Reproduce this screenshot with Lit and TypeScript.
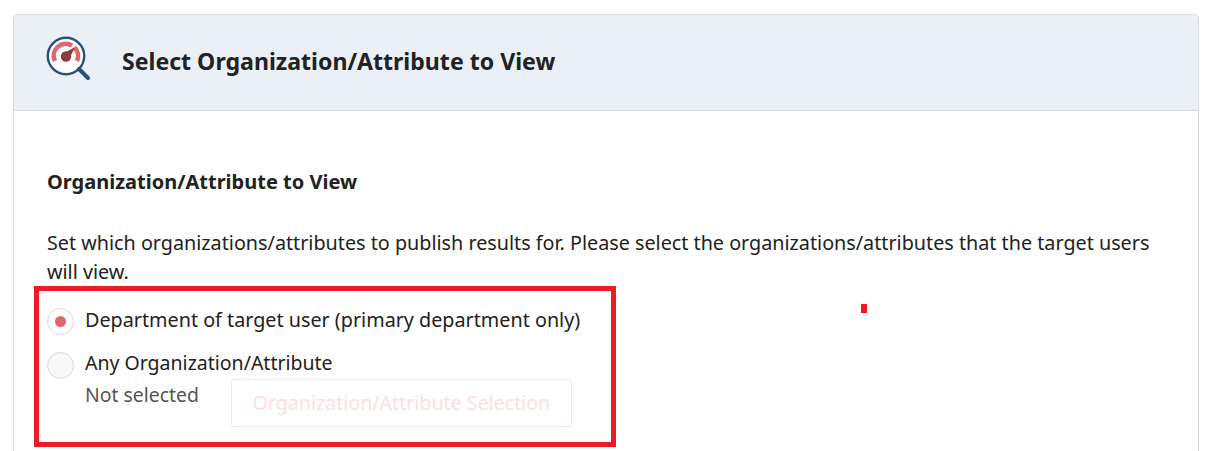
import { LitElement, html, css } from "lit";
import { customElement } from "lit/decorators.js";

@customElement("app-root")
export class AppRoot extends LitElement {
  static styles = css`
    :host {
      display: block;
      position: relative;
      height: 451px;
      overflow: hidden;
      background: #fff;
      font-family: "Noto Sans", "Open Sans", sans-serif;
      color: #222;
    }
    .page {
      padding: 14px 8px 0 13px;
    }
    .card {
      border: 1px solid #d9d9d9;
      border-bottom: none;
      border-radius: 5px 5px 0 0;
      height: 500px;
    }
    .head {
      display: flex;
      align-items: center;
      height: 95px;
      background: #ebf0f7;
      border-bottom: 1px solid #d9d9d9;
      border-radius: 4px 4px 0 0;
      padding-left: 32px;
      gap: 31px;
    }
    .head svg {
      width: 45px;
      height: 45px;
      flex: none;
      margin-top: -8px;
    }
    h1 {
      margin: -3px 0 0;
      font-size: 23.1px;
      font-weight: 700;
      line-height: 30px;
    }
    .body {
      padding: 56px 32px 0 33px;
    }
    h2 {
      margin: 0 0 31px;
      font-size: 20px;
      font-weight: 700;
      line-height: 30px;
    }
    p {
      margin: 0;
      font-size: 19.75px;
      line-height: 29px;
    }
    .opts {
      display: flex;
      flex-direction: column;
      gap: 16px;
      margin-top: 21px;
    }
    .opt {
      display: flex;
      align-items: center;
      gap: 11px;
      font-size: 19.75px;
      height: 28px;
    }
    .opt.any {
      font-size: 19.5px;
    }
    .opt .label {
      margin-bottom: 4px;
    }
    .opt.any .label {
      margin-bottom: 6px;
    }
    .radio {
      width: 27px;
      height: 27px;
      box-sizing: border-box;
      border: 1px solid #d9d9d9;
      border-radius: 50%;
      background: #f8f8f8;
      display: flex;
      align-items: center;
      justify-content: center;
      flex: none;
    }
    .radio.on {
      background: #fff;
    }
    .radio.on::after {
      content: "";
      width: 11px;
      height: 11px;
      border-radius: 50%;
      background: #de686c;
    }
    .sel {
      display: flex;
      align-items: flex-start;
      gap: 32px;
      padding-left: 38px;
      margin-top: -16px;
      font-size: 19.4px;
      color: #555;
      line-height: 32px;
    }
    .btn {
      border: 1px solid #fae3e4;
      border-radius: 3px;
      width: 341px;
      height: 48px;
      box-sizing: border-box;
      display: flex;
      align-items: center;
      justify-content: center;
      color: #fbe0e1;
      font-size: 19.6px;
    }
    .mark {
      position: absolute;
      left: 34px;
      top: 286px;
      width: 582px;
      height: 161px;
      box-sizing: border-box;
      border: 5px solid #ed1c24;
    }
    .dot {
      position: absolute;
      left: 861px;
      top: 304px;
      width: 6px;
      height: 9px;
      background: #ed1c24;
    }
  `;

  render() {
    return html`
      <div class="page">
        <div class="card">
          <div class="head">
            <svg viewBox="0 0 45 45" fill="none">
              <circle cx="20" cy="20" r="18.2" fill="#fff" stroke="#2a5279" stroke-width="2.4" />
              <path d="M33 33 L42 42" stroke="#2a5279" stroke-width="4" stroke-linecap="round" />
              <path d="M8.9 25 A12 12 0 0 1 26 9.6" stroke="#de686c" stroke-width="4.6" />
              <path d="M28.5 11.5 A12 12 0 0 1 31.1 25" stroke="#de686c" stroke-width="4.6" />
              <circle cx="20" cy="20.5" r="5.2" fill="#8c3c40" />
              <path d="M18.5 17 L29 11 L23.5 22.5 Z" fill="#8c3c40" />
            </svg>
            <h1>Select Organization/Attribute to View</h1>
          </div>
          <div class="body">
            <h2>Organization/Attribute to View</h2>
            <p>
              Set which organizations/attributes to publish results for. Please select the
              organizations/attributes that the target users will view.
            </p>
            <div class="opts">
              <label class="opt"><span class="radio on"></span><span class="label">Department of target user (primary department only)</span></label>
              <label class="opt any"><span class="radio"></span><span class="label">Any Organization/Attribute</span></label>
              <div class="sel">
                <span>Not selected</span>
                <div class="btn">Organization/Attribute Selection</div>
              </div>
            </div>
          </div>
        </div>
      </div>
      <div class="mark"></div>
      <div class="dot"></div>
    `;
  }
}
